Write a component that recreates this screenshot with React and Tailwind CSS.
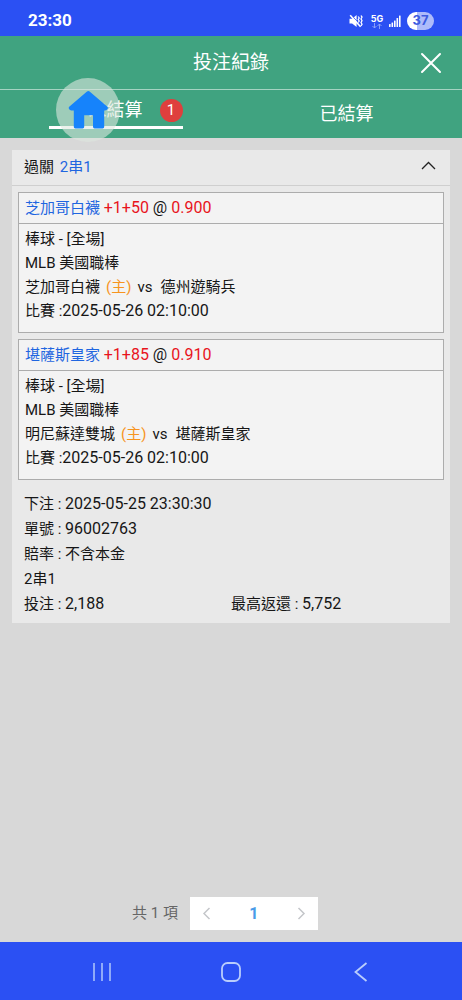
const bets = [
  {
    pick: "芝加哥白襪",
    line: "+1+50",
    odds: "0.900",
    home: "芝加哥白襪",
    away: "德州遊騎兵",
    time: "2025-05-26 02:10:00",
  },
  {
    pick: "堪薩斯皇家",
    line: "+1+85",
    odds: "0.910",
    home: "明尼蘇達雙城",
    away: "堪薩斯皇家",
    time: "2025-05-26 02:10:00",
  },
];

function StatusBar() {
  return (
    <div className="flex h-9 items-center justify-between bg-[#2b50f3] px-7 pt-1.5 text-white">
      <span className="font-['Roboto',sans-serif] text-[17px] font-bold">23:30</span>
      <div className="flex items-center">
        <svg width="14" height="14" viewBox="0 0 14 14" aria-hidden="true">
          <path d="M0.5 4.8h2.6L7.6 1v12L3.1 9.4H0.5z" fill="#fff" />
          <path d="M2 0.6l10.4 11.6" stroke="#2b50f3" strokeWidth="1" />
          <path d="M1.2 1.2l10.4 11.6" stroke="#fff" strokeWidth="1.6" />
          <path d="M9.2 2.5l1 1.5-1 1.5 1 1.5-1 1.5M12 1.5l1 1.6-1 1.8 1 1.8-1 1.8 1 1.8-1 1.5" stroke="#fff" strokeWidth="1.3" fill="none" />
        </svg>
        <div className="ml-2 flex w-3 flex-col items-center">
          <span className="font-['Inter','Roboto',sans-serif] text-[9px] leading-[9px] font-bold">5G</span>
          <svg width="10" height="6" viewBox="0 0 10 6" fill="none" stroke="#95a8f9" aria-hidden="true">
            <path d="M2.5 0v5M0.5 3l2 2 2-2M7.5 6V1M5.5 3l2-2 2 2" strokeWidth="0.9" />
          </svg>
        </div>
        <svg className="ml-1.5" width="12" height="12" viewBox="0 0 12 12" fill="#fff" aria-hidden="true">
          <rect x="0" y="9" width="1.6" height="3" rx=".5" />
          <rect x="2.5" y="7.5" width="1.6" height="4.5" rx=".5" />
          <rect x="5" y="5.5" width="1.6" height="6.5" rx=".5" />
          <rect x="7.5" y="3" width="1.6" height="9" rx=".5" />
          <rect x="10" y="0.5" width="1.6" height="11.5" rx=".5" />
        </svg>
        <span className="ml-1.5 flex h-[18px] w-[27px] items-center justify-center rounded-full bg-linear-to-r from-white from-37% to-[#aebbfa] to-37% font-['Inter','Roboto',sans-serif] text-[13px] font-bold text-[#3d5be0]">
          37
        </span>
      </div>
    </div>
  );
}

function BetBox({ bet }) {
  return (
    <article className="border border-[#acacac] bg-[#f3f3f3]">
      <h2 className="border-b border-[#acacac] px-1.5 leading-[30px] text-[#e8141c]">
        <span className="text-[#1f66e0]">{bet.pick}</span>{" "}
        <span className="text-base leading-5">
          {bet.line} <span className="text-[#161616]">@</span> {bet.odds}
        </span>
      </h2>
      <div className="px-1.5 pt-[3px] pb-[9px] leading-6">
        <p>棒球 - [全場]</p>
        <p>MLB 美國職棒</p>
        <p className="flex">
          <span>{bet.home}</span>
          <span className="ml-1.5 text-[#f7941e]">(主)</span>
          <span className="ml-1.5">vs</span>
          <span className="ml-2">{bet.away}</span>
        </p>
        <p>
          比賽 :<span className="text-base leading-5">{bet.time}</span>
        </p>
      </div>
    </article>
  );
}

function Detail({ label, value }) {
  return (
    <p>
      {label} : <span className="text-base leading-5">{value}</span>
    </p>
  );
}

export default function App() {
  return (
    <div className="flex min-h-screen flex-col bg-[#d8d8d8] font-['Roboto','Noto_Sans_CJK_TC',sans-serif] text-[15px] text-[#161616]">
      <StatusBar />
      <header className="relative bg-[#40a380] text-white">
        <div className="flex h-[54px] items-center border-b border-[#a5d3c2] px-5">
          <span className="w-[22px]" />
          <h1 className="flex-1 text-center text-[19px] leading-6">投注紀錄</h1>
          <button type="button" aria-label="關閉" className="flex w-[22px] justify-center">
            <svg className="shrink-0" width="22" height="22" viewBox="0 0 22 22" stroke="#fff" strokeWidth="2" strokeLinecap="round" aria-hidden="true">
              <path d="M2 2l18 18M20 2L2 20" />
            </svg>
          </button>
        </div>
        <nav className="grid h-12 grid-cols-2 text-lg">
          <div className="flex justify-center pb-[9px]">
            <button type="button" className="relative w-[134px] border-b-[3px] border-white pt-1">
              未結算
              <span className="absolute top-[9px] right-0 flex size-[23px] items-center justify-center rounded-full bg-[#df3f3d] text-[15px]">1</span>
            </button>
          </div>
          <button type="button">已結算</button>
        </nav>
        <button type="button" aria-label="首頁" className="absolute top-[42px] left-14 size-16 rounded-full bg-[#dde8e0]/60">
          <svg width="64" height="64" viewBox="0 0 64 64" fill="#1683fb" aria-hidden="true">
            <path d="M31 13.6Q32.3 12.6 33.6 13.6L51.4 28.8Q52.4 29.8 51.6 31Q50.6 32.4 49 32.4H48.2V48.8Q48.2 50.4 46.6 50.4H38.6Q37 50.4 37 48.8V37.2H28.2V48.8Q28.2 50.4 26.6 50.4H19.4Q17.8 50.4 17.8 48.8V32.4H15.4Q13.8 32.4 13 31Q12.2 29.8 13.2 28.8Z" />
          </svg>
        </button>
      </header>

      <main className="flex flex-1 flex-col px-3 pt-3 pb-3">
        <section className="bg-[#e9e9e9]">
          <button type="button" className="flex h-9 w-full items-center justify-between border-b border-[#cfcfcf] pr-3.5 pl-3">
            <span>
              過關 <span className="ml-0.5 text-[#1f66e0]">2串1</span>
            </span>
            <svg className="mb-1" width="15" height="9" viewBox="0 0 15 9" fill="none" stroke="#222" strokeWidth="1.3" aria-hidden="true">
              <path d="M1 8l6.5-6.5L14 8" />
            </svg>
          </button>
          <div className="flex flex-col gap-1.5 px-1.5 pt-1.5">
            {bets.map((bet) => (
              <BetBox key={bet.pick} bet={bet} />
            ))}
          </div>
          <div className="pt-3 pb-1.5 leading-[25px]">
            <div className="px-3">
              <Detail label="下注" value="2025-05-25 23:30:30" />
              <Detail label="單號" value="96002763" />
              <p>賠率 : 不含本金</p>
              <p>2串1</p>
            </div>
            <div className="grid grid-cols-2">
              <div className="pl-3">
                <Detail label="投注" value="2,188" />
              </div>
              <Detail label="最高返還" value="5,752" />
            </div>
          </div>
        </section>

        <nav aria-label="分頁" className="mt-auto flex items-center justify-center gap-3 pr-3">
          <span className="text-[#666]">共 1 項</span>
          <div className="flex h-[33px] w-32 items-center justify-between bg-white px-3">
            <button type="button" aria-label="上一頁" className="py-2 pr-1">
              <svg width="9" height="13" viewBox="0 0 9 13" fill="none" stroke="#c4c6ca" strokeWidth="1.5" aria-hidden="true">
                <path d="M7.5 1L2 6.5 7.5 12" />
              </svg>
            </button>
            <button type="button" className="text-base font-bold text-[#4a9be8]">1</button>
            <button type="button" aria-label="下一頁" className="py-2 pl-1">
              <svg width="9" height="13" viewBox="0 0 9 13" fill="none" stroke="#c4c6ca" strokeWidth="1.5" aria-hidden="true">
                <path d="M1.5 1L7 6.5 1.5 12" />
              </svg>
            </button>
          </div>
        </nav>
      </main>

      <footer className="flex h-[58px] items-center justify-center gap-[107px] bg-[#2b50f3] pt-0.5">
        <button type="button" aria-label="最近使用">
          <svg width="22" height="22" viewBox="0 0 22 22" stroke="#a9c1fb" strokeWidth="1.6" aria-hidden="true">
            <path d="M3 2v18M11 2v18M19 2v18" />
          </svg>
        </button>
        <button type="button" aria-label="主畫面">
          <svg width="22" height="22" viewBox="0 0 22 22" fill="none" stroke="#b9cdfc" strokeWidth="1.8" aria-hidden="true">
            <rect x="2" y="2" width="18" height="18" rx="5.5" />
          </svg>
        </button>
        <button type="button" aria-label="返回">
          <svg width="22" height="22" viewBox="0 0 22 22" fill="none" stroke="#b9cdfc" strokeWidth="1.8" aria-hidden="true">
            <path d="M17.5 2L6.5 11l11 9" />
          </svg>
        </button>
      </footer>
    </div>
  );
}
